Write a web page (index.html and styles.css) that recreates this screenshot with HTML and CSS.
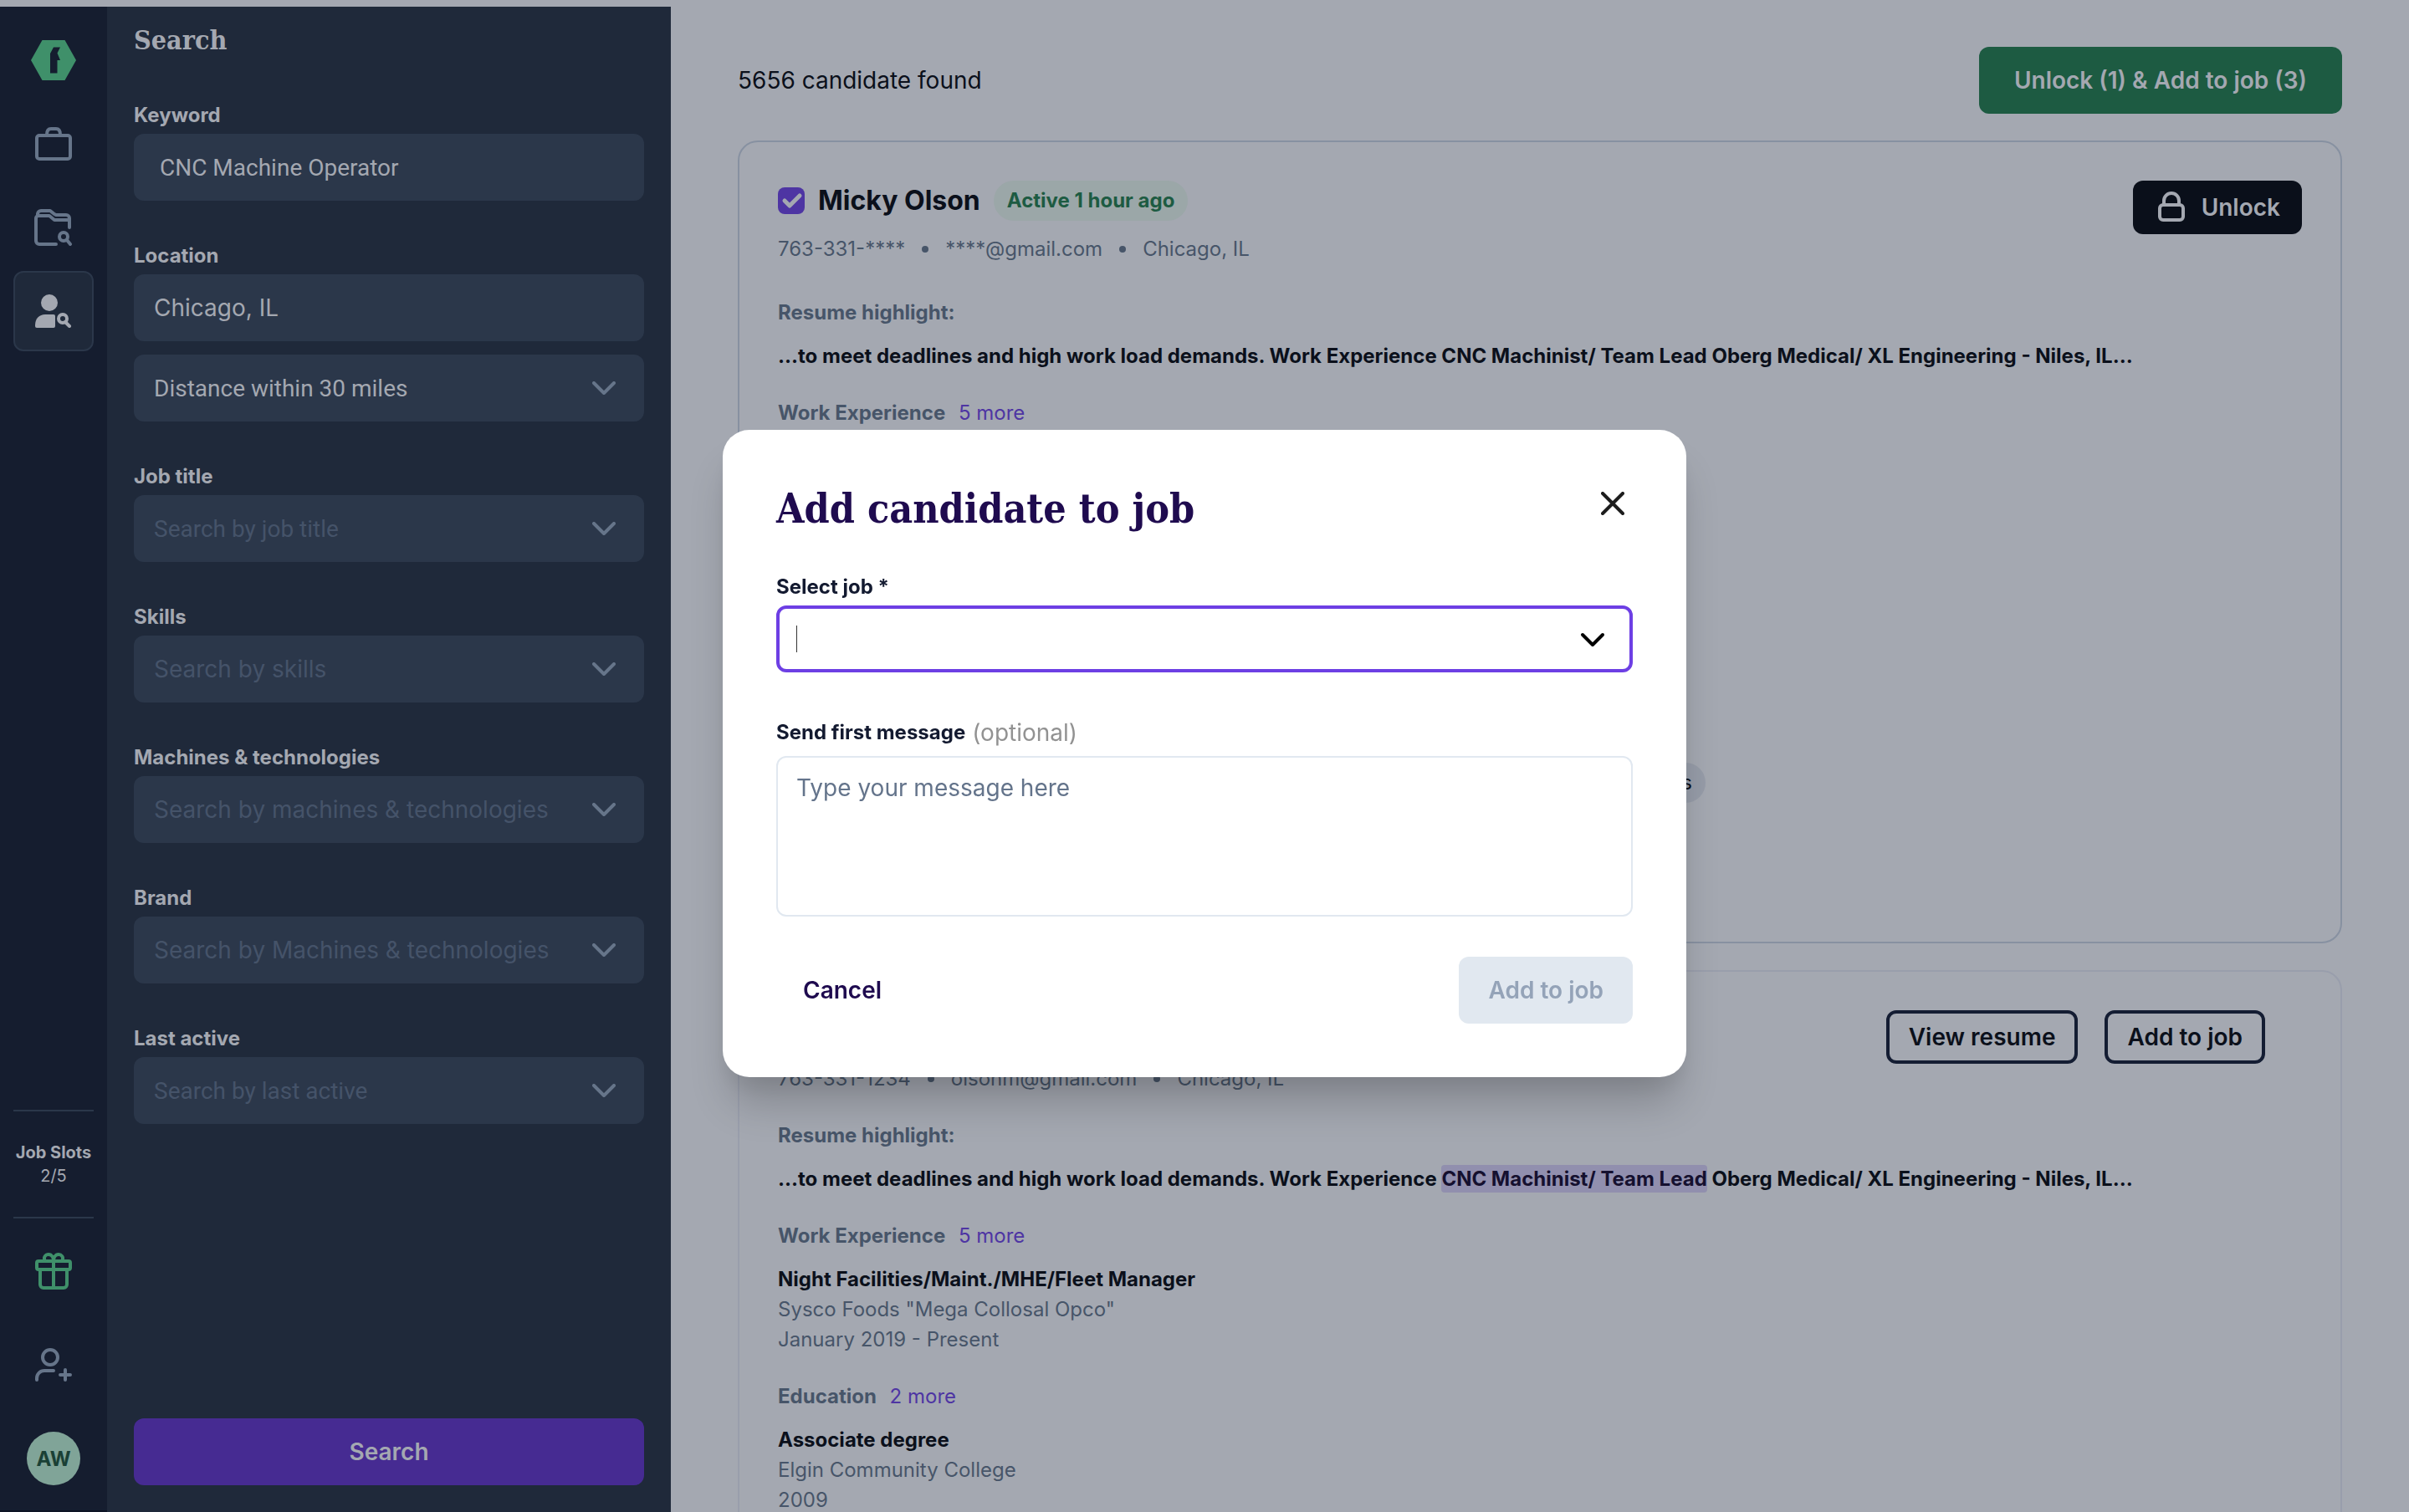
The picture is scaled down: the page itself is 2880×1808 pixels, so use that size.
FILE: index.html
```html
<!DOCTYPE html>
<html lang="en">
<head>
    <meta charset="UTF-8">
    <title>Candidate search</title>
    <link rel="stylesheet" href="styles.css">
</head>
<body>
    <div class="app">
        <nav class="rail">
            <a href="#" class="rail-item" aria-label="Home">
                <svg width="54" height="48" viewBox="0 0 54 48"><path fill="#3f906a" fill-rule="evenodd" d="M13.500 0h27L54 24 40.500 48h-27L0 24zM27 8.500 23 16v23.500h8.500V24H35l-3.500-8.500L35 8.500z"/></svg>
            </a>
            <a href="#" class="rail-item" aria-label="Jobs">
                <svg class="line-icon" width="44" height="40" viewBox="0 0 44 40"><rect x="2" y="10" width="40" height="28" rx="3"/><path d="M14 9c0-5 2-7 5-7h6c3 0 5 2 5 7"/></svg>
            </a>
            <a href="#" class="rail-item" aria-label="Projects">
                <svg class="line-icon" width="46" height="44" viewBox="0 0 46 44"><path d="M4 8V6a4 4 0 0 1 4-4h11l5 4 2 1h12a4 4 0 0 1 4 4v11"/><path d="M26 42H6a4 4 0 0 1-4-4V11a3 3 0 0 1 3-3h13l6 5h18"/><circle cx="35" cy="33" r="5"/><path d="M39 37l4 5"/></svg>
            </a>
            <a href="#" class="rail-item active" aria-label="Candidates">
                <svg width="44" height="40" viewBox="0 0 44 40"><circle cx="17" cy="10" r="10" fill="#a4a8b1"/><path fill="#a4a8b1" d="M0 37c0-8 5-13 12-13h10a2 2 0 0 1 2 2v12a2 2 0 0 1-2 2H2a2 2 0 0 1-2-2z"/><circle cx="33" cy="29" r="5" fill="none" stroke="#a4a8b1" stroke-width="4"/><path d="M36 33l5 5" stroke="#a4a8b1" stroke-width="4" stroke-linecap="round"/></svg>
            </a>

            <div class="job-slots">
                <strong>Job Slots</strong>
                <span>2/5</span>
            </div>
            <a href="#" class="rail-item" aria-label="Rewards">
                <svg class="line-icon green" width="44" height="44" viewBox="0 0 44 44"><rect x="2" y="10" width="40" height="10" rx="2"/><path d="M6 20v18a4 4 0 0 0 4 4h24a4 4 0 0 0 4-4V20M22 10v32M12 10C9 5 13 2 16 2c4 0 6 4 6 8 0-4 2-8 6-8 3 0 7 3 4 8"/></svg>
            </a>
            <a href="#" class="rail-item invite" aria-label="Invite">
                <svg class="line-icon" width="44" height="40" viewBox="0 0 44 40"><circle cx="18" cy="11" r="9"/><path d="M2 38v-2a9 9 0 0 1 9-9h11M36 26v12M30 32h12"/></svg>
            </a>
            <button class="avatar">AW</button>
        </nav>

        <form class="filters">
            <h2>Search</h2>

            <div class="field">
                <label for="keyword">Keyword</label>
                <input type="text" id="keyword" class="control roboto keyword" value="CNC Machine Operator">
            </div>
            <div class="field">
                <label for="location">Location</label>
                <input type="text" id="location" class="control" value="Chicago, IL">
                <div class="select-wrap distance">
                    <select class="control roboto" aria-label="Distance"><option>Distance within 30 miles</option></select>
                    <svg class="chevron" width="28" height="16" viewBox="0 0 28 16"><path d="M2 2l12 12L26 2"/></svg>
                </div>
            </div>
            <div class="field">
                <label for="jobTitle">Job title</label>
                <div class="select-wrap">
                    <select id="jobTitle" class="control roboto empty"><option>Search by job title</option></select>
                    <svg class="chevron" width="28" height="16" viewBox="0 0 28 16"><path d="M2 2l12 12L26 2"/></svg>
                </div>
            </div>
            <div class="field">
                <label for="skills">Skills</label>
                <div class="select-wrap">
                    <select id="skills" class="control empty"><option>Search by skills</option></select>
                    <svg class="chevron" width="28" height="16" viewBox="0 0 28 16"><path d="M2 2l12 12L26 2"/></svg>
                </div>
            </div>
            <div class="field">
                <label for="machines">Machines &amp; technologies</label>
                <div class="select-wrap">
                    <select id="machines" class="control empty"><option>Search by machines &amp; technologies</option></select>
                    <svg class="chevron" width="28" height="16" viewBox="0 0 28 16"><path d="M2 2l12 12L26 2"/></svg>
                </div>
            </div>
            <div class="field">
                <label for="brand">Brand</label>
                <div class="select-wrap">
                    <select id="brand" class="control empty"><option>Search by Machines &amp; technologies</option></select>
                    <svg class="chevron" width="28" height="16" viewBox="0 0 28 16"><path d="M2 2l12 12L26 2"/></svg>
                </div>
            </div>
            <div class="field">
                <label for="lastActive">Last active</label>
                <div class="select-wrap">
                    <select id="lastActive" class="control roboto empty"><option>Search by last active</option></select>
                    <svg class="chevron" width="28" height="16" viewBox="0 0 28 16"><path d="M2 2l12 12L26 2"/></svg>
                </div>
            </div>

            <button type="button" class="btn search-btn">Search</button>
        </form>

        <main class="results">
            <div class="results-header">
                <p>5656 candidate found</p>
                <button class="btn bulk-btn">Unlock (1) &amp; Add to job (3)</button>
            </div>

            <article class="card selected">
                <div class="card-top">
                    <div>
                        <div class="name-row">
                            <input type="checkbox" id="pickMicky" checked>
                            <label for="pickMicky" class="name">Micky Olson</label>
                            <span class="badge">Active 1 hour ago</span>
                        </div>
                        <div class="contact"><span>763-331-****</span><i class="dot"></i><span>****@gmail.com</span><i class="dot"></i><span>Chicago, IL</span></div>
                    </div>
                    <button class="btn unlock-btn">
                        <svg width="40" height="40" viewBox="0 0 40 40"><rect x="6" y="17" width="28" height="18" rx="4"/><path d="M11 17v-5a9 9 0 0 1 18 0v5"/></svg>
                        Unlock
                    </button>
                </div>
                <h3 class="first">Resume highlight:</h3>
                <p class="excerpt">...to meet deadlines and high work load demands. Work Experience CNC Machinist/ Team Lead Oberg Medical/ XL Engineering - Niles, IL...</p>
                <h3>Work Experience <a href="#">5 more</a></h3>
                <p class="strong">Night Facilities/Maint./MHE/Fleet Manager</p>
                <p>Sysco Foods "Mega Collosal Opco"</p>
                <p>January 2019 - Present</p>
                <h3>Education <a href="#">2 more</a></h3>
                <p class="strong">Associate degree</p>
                <p>Elgin Community College</p>
                <p>2009</p>
                <h3>Skills</h3>
                <div class="tags"><span class="tag">CNC Machines</span></div>
                <h3>Brand</h3>
                <p class="strong">XL Engineering</p>
            </article>

            <article class="card">
                <div class="card-top">
                    <div>
                        <div class="name-row">
                            <input type="checkbox" id="pickOlson">
                            <label for="pickOlson" class="name">Micky Olson</label>
                        </div>
                        <div class="contact"><span>763-331-1234</span><i class="dot"></i><span>olsonm@gmail.com</span><i class="dot"></i><span>Chicago, IL</span></div>
                    </div>
                    <div class="card-actions">
                        <button class="btn outline-btn">View resume</button>
                        <button class="btn outline-btn">Add to job</button>
                    </div>
                </div>
                <h3>Resume highlight:</h3>
                <p class="excerpt">...to meet deadlines and high work load demands. Work Experience <mark>CNC Machinist/ Team Lead</mark> Oberg Medical/ XL Engineering - Niles, IL...</p>
                <h3>Work Experience <a href="#">5 more</a></h3>
                <p class="strong">Night Facilities/Maint./MHE/Fleet Manager</p>
                <p>Sysco Foods "Mega Collosal Opco"</p>
                <p>January 2019 - Present</p>
                <h3>Education <a href="#">2 more</a></h3>
                <p class="strong">Associate degree</p>
                <p>Elgin Community College</p>
                <p>2009</p>
            </article>
        </main>
    </div>

    <div class="modal-layer">
        <div class="modal" role="dialog" aria-labelledby="modalTitle">
            <div class="modal-header">
                <h1 id="modalTitle">Add candidate to job</h1>
                <button class="close-btn" aria-label="Close">
                    <svg width="28" height="28" viewBox="0 0 28 28"><path d="M2 2l24 24M26 2L2 26"/></svg>
                </button>
            </div>

            <label for="jobSelect" class="modal-label">Select job *</label>
            <div class="select-wrap">
                <select id="jobSelect" class="job-select"><option></option></select>
                <span class="caret"></span>
                <svg class="chevron dark" width="30" height="18" viewBox="0 0 30 18"><path d="M3 3l12 12L27 3"/></svg>
            </div>

            <div class="message-label">
                <label for="message" class="modal-label">Send first message</label>
                <span>(optional)</span>
            </div>
            <textarea id="message" class="message" placeholder="Type your message here"></textarea>

            <div class="modal-actions">
                <button class="btn cancel-btn">Cancel</button>
                <button class="btn add-btn" disabled>Add to job</button>
            </div>
        </div>
    </div>
</body>
</html>
```
FILE: styles.css
```css
* {
    box-sizing: border-box;
}

body {
    margin: 0;
    background-color: #a4a8b1;
    font-family: Inter, "Liberation Sans", sans-serif;
    font-size: 24px;
    line-height: 36px;
    color: #475569;
}

h1, h2, h3, p {
    margin: 0;
}

button, input, select, textarea {
    font-family: inherit;
    margin: 0;
}

a {
    text-decoration: none;
}

.app {
    display: flex;
    height: 100vh;
    padding-top: 8px;
    overflow: hidden;
}

/* left icon rail */
.rail {
    flex: none;
    width: 128px;
    padding: 16px 16px 30px;
    display: flex;
    flex-direction: column;
    align-items: center;
    background-color: #151d2f;
    border-bottom: 2px solid #0d1324;
}

.rail-item {
    flex: none;
    width: 96px;
    height: 96px;
    margin-bottom: 4px;
    display: flex;
    align-items: center;
    justify-content: center;
    border-radius: 12px;
}

.rail-item.active {
    background-color: #1f293a;
    border: 2px solid #2b374a;
}

.line-icon {
    fill: none;
    stroke: #66758a;
    stroke-width: 4;
    stroke-linecap: round;
    stroke-linejoin: round;
}

.line-icon.green {
    stroke: #3f906a;
}

.job-slots {
    width: 100%;
    height: 130px;
    margin: auto 0 15px;
    display: flex;
    flex-direction: column;
    align-items: center;
    justify-content: center;
    border-top: 2px solid #2b374a;
    border-bottom: 2px solid #2b374a;
    color: #a4a8b1;
    font-size: 20px;
    line-height: 28px;
    white-space: nowrap;
}

.rail-item.invite {
    margin: 12px 0 32px;
}

.avatar {
    flex: none;
    width: 64px;
    height: 64px;
    padding: 0;
    border: none;
    border-radius: 50%;
    background-color: #80a498;
    color: #1a4035;
    font-size: 24px;
    font-weight: 700;
}

/* search filters */
.filters {
    flex: none;
    width: 674px;
    padding: 24px 32px 32px;
    display: flex;
    flex-direction: column;
    background-color: #1f293a;
}

.filters h2 {
    margin-bottom: 56px;
    font-family: "DejaVu Serif Condensed", "DejaVu Serif", serif;
    font-size: 32px;
    line-height: 32px;
    color: #a4a8b1;
}

.field {
    margin-bottom: 48px;
}

.field label {
    display: block;
    margin-bottom: 4px;
    font-weight: 700;
    color: #a4a8b1;
}

.control {
    display: block;
    width: 100%;
    height: 80px;
    padding: 0 24px;
    appearance: none;
    border: none;
    border-radius: 12px;
    background-color: #2b374a;
    color: #a4a8b1;
    font-size: 28px;
}

.control.keyword {
    padding: 0 31px;
}

.control.roboto {
    font-family: Roboto, sans-serif;
}

.control.empty {
    color: #455369;
}

.select-wrap {
    position: relative;
}

.select-wrap.distance {
    margin-top: 16px;
}

.chevron {
    position: absolute;
    top: 32px;
    right: 34px;
    fill: none;
    stroke: #66758a;
    stroke-width: 4;
    stroke-linecap: round;
    stroke-linejoin: round;
    pointer-events: none;
}

.chevron.dark {
    right: 33px;
    stroke: #000;
}

.btn {
    border: none;
    border-radius: 12px;
    font-size: 28px;
    font-weight: 600;
    line-height: 40px;
}

.search-btn {
    height: 80px;
    margin-top: auto;
    background-color: #462b92;
    color: #a4a8b1;
}

/* results */
.results {
    flex: 1;
    min-width: 0;
    padding: 48px 80px 0;
}

.results-header {
    display: flex;
    align-items: center;
    justify-content: space-between;
    margin-bottom: 32px;
    font-size: 28px;
    color: #0b101b;
}

.bulk-btn {
    height: 80px;
    padding: 0 42px;
    background-color: #1d5b42;
    color: #a4a8b1;
}

.card {
    margin-bottom: 32px;
    padding: 46px;
    border: 2px solid #999eac;
    border-radius: 24px;
}

.card.selected {
    border-color: #8791a1;
}

.card-top {
    display: flex;
    align-items: flex-start;
    justify-content: space-between;
}

.name-row {
    display: flex;
    align-items: center;
    gap: 16px;
    height: 48px;
    margin-bottom: 16px;
}

.name-row input {
    width: 32px;
    height: 32px;
    appearance: none;
    border: 2px solid #66758a;
    border-radius: 8px;
}

.name-row input:checked {
    border: none;
    background: #4e35a3 url("data:image/svg+xml,%3Csvg xmlns='http://www.w3.org/2000/svg' viewBox='0 0 32 32'%3E%3Cpath d='M8 16l6 6L26 10' fill='none' stroke='%23a4a8b1' stroke-width='5' stroke-linecap='round' stroke-linejoin='round'/%3E%3C/svg%3E");
}

.name {
    font-size: 32px;
    font-weight: 700;
    color: #0b101b;
}

.badge {
    padding: 6px 16px;
    border-radius: 24px;
    background-color: #9ba7a8;
    color: #1d5b42;
    font-weight: 700;
}

.contact {
    display: flex;
    align-items: center;
    gap: 20px;
}

.dot {
    width: 8px;
    height: 8px;
    border-radius: 50%;
    background-color: #475569;
}

.card h3 {
    margin: 32px 0 16px;
    font-size: 24px;
    font-weight: 700;
}

.card h3.first {
    margin-top: 40px;
}

.card h3 a {
    margin-left: 10px;
    font-weight: 400;
    color: #4e35a3;
}

.strong {
    font-weight: 700;
    color: #0b101b;
}

.excerpt {
    font-weight: 650;
    color: #0b101b;
}

mark {
    padding: 2px 0;
    border-radius: 4px;
    background-color: #918fae;
    color: #15102f;
}

.tags {
    display: flex;
    justify-content: flex-end;
    max-width: 1109px;
}

.tag {
    padding: 6px 16px;
    border-radius: 24px;
    background-color: #969ca8;
    color: #0b101b;
}

.unlock-btn {
    display: flex;
    align-items: center;
    gap: 16px;
    height: 64px;
    padding: 0 26px;
    background-color: #0a0f1a;
    color: #a4a8b1;
}

.unlock-btn svg {
    fill: none;
    stroke: #a4a8b1;
    stroke-width: 4;
}

.card-actions {
    display: flex;
    gap: 32px;
    margin-right: 44px;
}

.outline-btn {
    height: 64px;
    padding: 0 23px;
    border: 4px solid #141d33;
    background: none;
    color: #0b101b;
}

/* add to job modal */
.modal-layer {
    position: fixed;
    inset: 0;
    display: flex;
    align-items: center;
    justify-content: center;
    padding-bottom: 6px;
}

.modal {
    width: 1152px;
    padding: 64px;
    border-radius: 32px;
    background-color: #fff;
    box-shadow: 0 40px 50px -10px rgba(0, 0, 0, 0.2), 0 16px 24px -4px rgba(0, 0, 0, 0.06);
}

.modal-header {
    display: flex;
    align-items: flex-start;
    justify-content: space-between;
    margin-bottom: 46px;
}

.modal-header h1 {
    font-family: "DejaVu Serif Condensed", "DejaVu Serif", serif;
    font-size: 48px;
    line-height: 60px;
    color: #1f0b4f;
}

.close-btn {
    display: flex;
    align-items: center;
    justify-content: center;
    width: 48px;
    height: 48px;
    padding: 0;
    border: none;
    background: none;
}

.close-btn svg {
    fill: none;
    stroke: #1d1d1d;
    stroke-width: 4;
    stroke-linecap: round;
}

.modal-label {
    display: block;
    font-weight: 700;
    color: #131a30;
}

.job-select {
    display: block;
    width: 100%;
    height: 80px;
    margin-top: 4px;
    padding: 0 24px;
    appearance: none;
    border: 4px solid #6d3fe4;
    border-radius: 12px;
    background-color: #fff;
    font-size: 28px;
}

.caret {
    position: absolute;
    top: 24px;
    left: 24px;
    width: 1px;
    height: 32px;
    background-color: #333;
}

.message-label {
    display: flex;
    align-items: center;
    gap: 8px;
    margin: 52px 0 8px;
    font-size: 28px;
    line-height: 40px;
    color: #929292;
}

.message-label label {
    font-size: 24px;
}

.message {
    display: block;
    width: 100%;
    height: 192px;
    padding: 16px 22px;
    resize: none;
    border: 2px solid #e1e8f0;
    border-radius: 12px;
    font-size: 28px;
    line-height: 40px;
}

.message::placeholder {
    color: #64748b;
}

.modal-actions {
    display: flex;
    justify-content: space-between;
    margin-top: 48px;
}

.modal-actions .btn {
    height: 80px;
    padding: 0 32px;
}

.cancel-btn {
    background: none;
    color: #1f0b4f;
}

.modal-actions .add-btn {
    padding: 0 35px;
    background-color: #e1e8f0;
    color: #94a3b8;
}
```
